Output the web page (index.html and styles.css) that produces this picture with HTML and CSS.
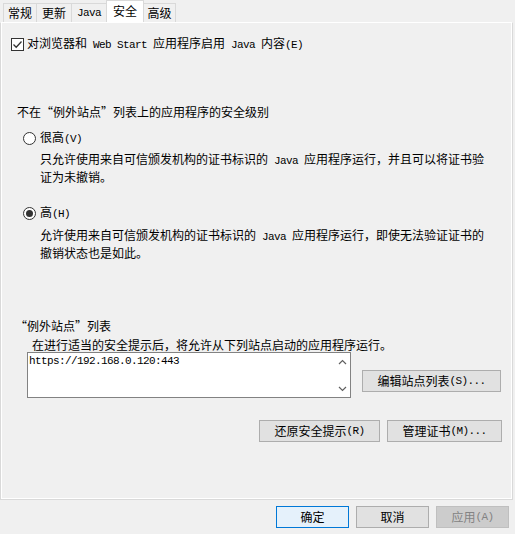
FILE: index.html
```html
<!DOCTYPE html>
<html lang="zh-CN">
<head>
<meta charset="utf-8">
<link rel="stylesheet" href="styles.css">
</head>
<body>
<div class="tabs">
  <div class="tab t1">常规</div>
  <div class="tab t2">更新</div>
  <div class="tab t3"><span class="m">Java</span></div>
  <div class="tab t4 active">安全</div>
  <div class="tab t5">高级</div>
</div>
<div class="panel">
  <div class="enable">
    <span class="check"><svg width="11" height="11" viewBox="0 0 11 11"><path d="M1.5 5.5 L4.2 8.2 L9.5 2.5" fill="none" stroke="#333" stroke-width="1.3"/></svg></span>
    <span>对浏览器和<span class="m"> Web Start </span>应用程序启用<span class="m"> Java </span>内容<span class="m">(E)</span></span>
  </div>
  <div class="heading">不在“例外站点”列表上的应用程序的安全级别</div>
  <div class="radio-row r1"><span class="radio"></span><span>很高<span class="m">(V)</span></span></div>
  <div class="desc d1">只允许使用来自可信颁发机构的证书标识的<span class="m"> Java </span>应用程序运行，并且可以将证书验<br>证为未撤销。</div>
  <div class="radio-row r2"><span class="radio on"></span><span>高<span class="m">(H)</span></span></div>
  <div class="desc d2">允许使用来自可信颁发机构的证书标识的<span class="m"> Java </span>应用程序运行，即使无法验证证书的<br>撤销状态也是如此。</div>
  <div class="list-title">“例外站点”列表</div>
  <div class="list-sub">在进行适当的安全提示后，将允许从下列站点启动的应用程序运行。</div>
  <div class="sites-row">
    <div class="sites">
      <div class="sites-text m">https://192.168.0.120:443</div>
      <div class="scroll">
        <svg width="9" height="6" viewBox="0 0 9 6"><path d="M1 5 L4.5 1.5 L8 5" fill="none" stroke="#606060" stroke-width="1.2"/></svg>
        <svg width="9" height="6" viewBox="0 0 9 6"><path d="M1 1 L4.5 4.5 L8 1" fill="none" stroke="#606060" stroke-width="1.2"/></svg>
      </div>
    </div>
    <div class="btn edit">编辑站点列表<span class="m">(S)...</span></div>
  </div>
  <div class="btn-row">
    <div class="btn restore">还原安全提示<span class="m">(R)</span></div>
    <div class="btn certs">管理证书<span class="m">(M)...</span></div>
  </div>
</div>
<div class="footer">
  <div class="btn fbtn default">确定</div>
  <div class="btn fbtn">取消</div>
  <div class="btn fbtn disabled">应用<span class="m">(A)</span></div>
</div>
</body>
</html>
```
FILE: styles.css
```css
html, body {
  margin: 0;
  padding: 0;
  background: #f0f0f0;
}
body {
  width: 515px;
  height: 534px;
  font-family: "Noto Sans CJK SC", "Microsoft YaHei", sans-serif;
  font-size: 12px;
  line-height: 16px;
  color: #000;
  overflow: hidden;
}
.m {
  font-family: "Liberation Mono", monospace;
  font-size: 11px;
  letter-spacing: -0.6px;
  white-space: pre;
}
.tabs {
  display: flex;
  align-items: flex-end;
  height: 22px;
  padding-left: 3px;
}
.tab {
  box-sizing: border-box;
  height: 19px;
  border: 1px solid #d9d9d9;
  border-bottom: none;
  margin-right: -1px;
  display: flex;
  align-items: center;
  justify-content: center;
  background: #f0f0f0;
  font-size: 12px;
}
.t1 { width: 34px; }
.t2 { width: 36px; }
.t3 { width: 36px; }
.t4 { width: 38px; }
.t5 { width: 33px; }
.tab.active {
  height: 22px;
  background: #fff;
  position: relative;
  z-index: 1;
  padding-bottom: 1px;
}
.panel {
  box-sizing: border-box;
  width: 513px;
  height: 478px;
  border: 1px solid #d9d9d9;
  border-top-color: #fff;
  box-shadow: inset 1px 0 0 #fff, inset -1px 0 0 #fff, inset 0 -1px 0 #fff;
  display: flex;
  flex-direction: column;
  align-items: flex-start;
}
.enable {
  display: flex;
  align-items: center;
  height: 16px;
  margin: 13px 0 0 10px;
  gap: 3px;
}
.check {
  box-sizing: border-box;
  width: 13px;
  height: 13px;
  border: 1px solid #333;
  background: #fff;
  display: flex;
  align-items: center;
  justify-content: center;
}
.heading {
  margin: 52px 0 0 16px;
}
.radio-row {
  display: flex;
  align-items: center;
  height: 16px;
  margin-left: 22px;
  gap: 4px;
}
.r1 { margin-top: 10px; }
.r2 { margin-top: 20px; }
.radio {
  box-sizing: border-box;
  width: 13px;
  height: 13px;
  border: 1px solid #333;
  border-radius: 50%;
  background: #fff;
  display: flex;
  align-items: center;
  justify-content: center;
}
.radio.on::after {
  content: "";
  width: 7px;
  height: 7px;
  border-radius: 50%;
  background: #333;
}
.desc {
  margin-left: 39px;
}
.d1 { margin-top: 5px; }
.d2 { margin-top: 6px; }
.list-title {
  margin: 57px 0 0 14px;
}
.list-sub {
  margin: 4px 0 0 31px;
  line-height: 14px;
}
.sites-row {
  display: flex;
  align-items: flex-start;
  margin-left: 26px;
}
.sites {
  box-sizing: border-box;
  width: 324px;
  height: 46px;
  border: 1px solid #828282;
  background: #fff;
  display: flex;
}
.sites-text {
  flex: 1;
  padding: 2px 0 0 1px;
  line-height: 13px;
  color: #000;
}
.scroll {
  width: 16px;
  display: flex;
  flex-direction: column;
  justify-content: space-between;
  align-items: center;
  padding: 6px 0 5px;
}
.btn {
  box-sizing: border-box;
  height: 22px;
  border: 1px solid #adadad;
  background: #e1e1e1;
  display: flex;
  align-items: center;
  justify-content: center;
  white-space: nowrap;
}
.edit {
  width: 139px;
  margin: 18px 0 0 11px;
}
.btn-row {
  align-self: stretch;
  display: flex;
  justify-content: flex-end;
  gap: 7px;
  margin-top: 22px;
  padding-right: 10px;
}
.restore { width: 121px; }
.certs { width: 115px; }
.footer {
  display: flex;
  justify-content: flex-end;
  gap: 7px;
  padding: 6px 6px 0 0;
}
.fbtn { width: 73px; }
.default {
  border-color: #0078d7;
  background: #e5f1fb;
}
.disabled {
  border-color: #bfbfbf;
  background: #cccccc;
  color: #838383;
}
```
